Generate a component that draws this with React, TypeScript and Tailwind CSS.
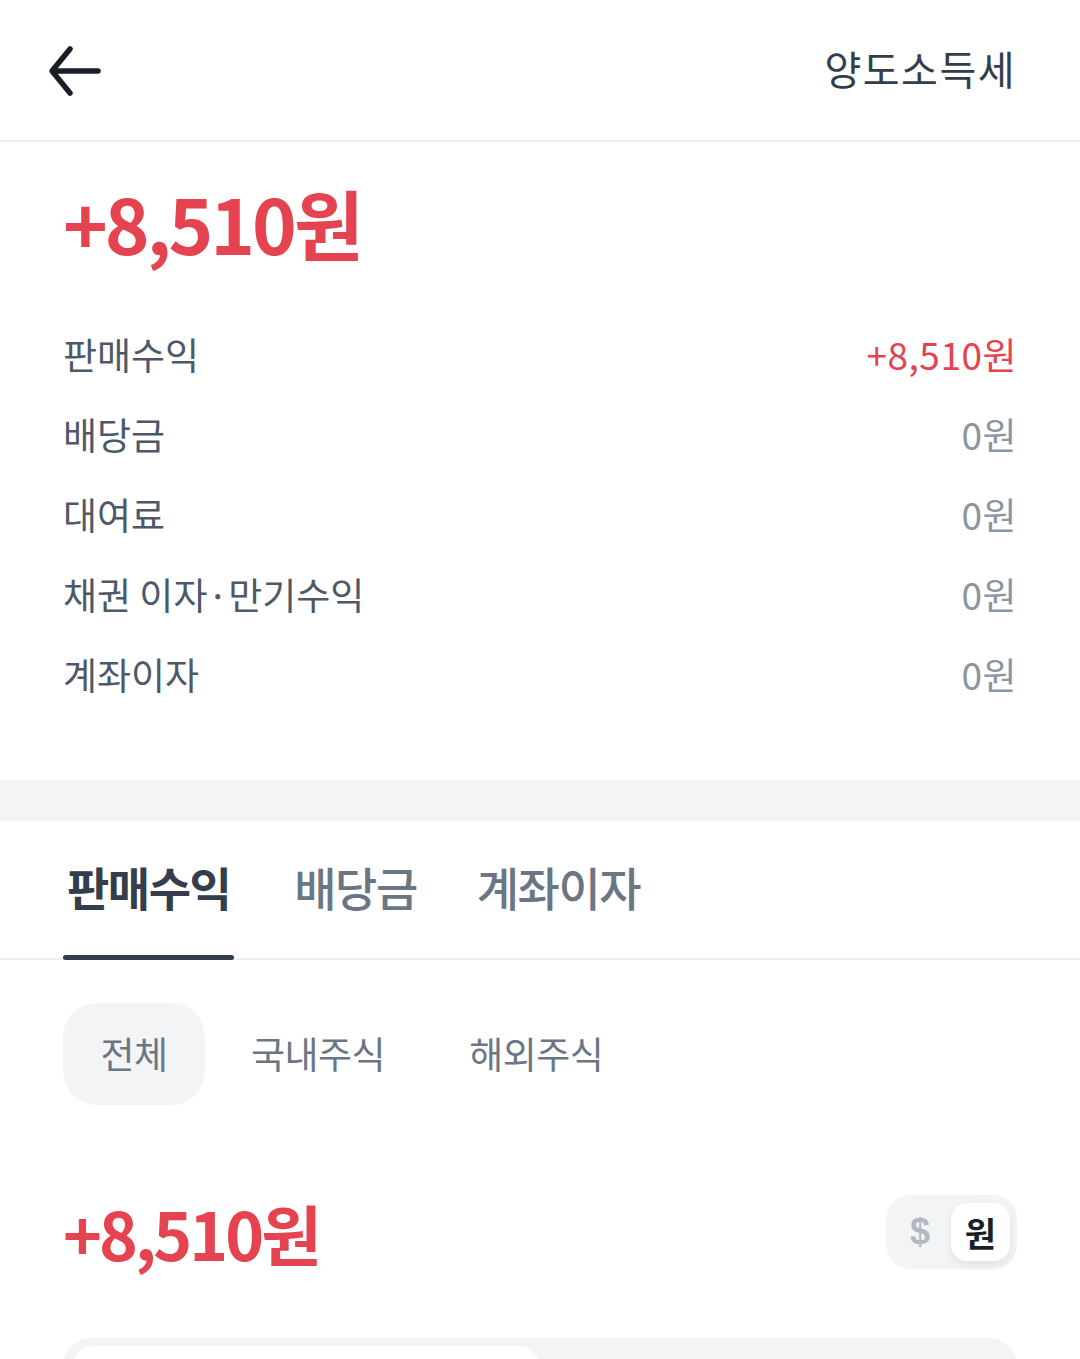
import React from 'react';

const rows = [
    { label: '판매수익', value: '+8,510원', red: true },
    { label: '배당금', value: '0원' },
    { label: '대여료', value: '0원' },
    { label: '채권 이자·만기수익', value: '0원' },
    { label: '계좌이자', value: '0원' },
];

const font = { fontFamily: '"Noto Sans CJK KR", "Noto Sans", sans-serif' };

export default function App() {
    return (
        <div className="w-[1080px] h-[1359px] bg-white overflow-hidden" style={font}>
            {/* header */}
            <div className="h-[142px] flex items-center justify-between pl-[44px] pr-[64px] border-b-2 border-[#eceef0]">
                <svg width="60" height="60" viewBox="0 0 60 60" fill="none" className="mt-[10px]">
                    <path d="M54 26H9M26 4L8 26L26 48" stroke="#191f28" strokeWidth="5.5" strokeLinecap="round" strokeLinejoin="round" />
                </svg>
                <span className="text-[40px] tracking-[1.5px] text-[#333d4b] leading-none -mt-[4px]">양도소득세</span>
            </div>

            {/* summary */}
            <div className="px-[63px]">
                <div className="pt-[35px] text-[76px] font-bold text-[#e5434f] tracking-[-3px] leading-[90px]">+8,510원</div>
                <div className="mt-[48px] pb-[65px]">
                    {rows.map((r) => (
                        <div key={r.label} className="h-[80px] flex items-center justify-between text-[37px] tracking-[0px]">
                            <span className="text-[#4e5968]">{r.label}</span>
                            <span className={r.red ? 'text-[#e5434f] tracking-[0.5px]' : 'text-[#8b95a1] tracking-[0.5px]'}>{r.value}</span>
                        </div>
                    ))}
                </div>
            </div>

            <div className="h-[41px] bg-[#f2f4f6]" />

            {/* tabs */}
            <div className="h-[139px] flex items-end px-[63px] border-b-2 border-[#eceef0]">
                <div className="flex gap-[60px] items-end">
                    <div className="flex flex-col items-center">
                        <span className="text-[46px] font-bold tracking-[-1.5px] text-[#333d4b] leading-none px-[4px]">판매수익</span>
                        <div className="mt-[46px] h-[5px] w-full rounded-full bg-[#333d4b] -mb-[2px]" />
                    </div>
                    <span className="text-[46px] font-medium tracking-[-1.5px] text-[#6b7684] leading-none mb-[49px]">배당금</span>
                    <span className="text-[46px] font-medium tracking-[-1.5px] text-[#6b7684] leading-none mb-[49px]">계좌이자</span>
                </div>
            </div>

            {/* chips */}
            <div className="px-[63px] mt-[43px] flex items-center gap-[46px]">
                <div className="h-[102px] w-[142px] rounded-[34px] bg-[#f2f4f6] flex items-center justify-center text-[37px] tracking-[-0.5px] text-[#6b7684]">전체</div>
                <span className="text-[37px] tracking-[-0.5px] text-[#6b7684]">국내주식</span>
                <span className="ml-[38px] text-[37px] tracking-[-0.5px] text-[#6b7684]">해외주식</span>
            </div>

            {/* amount + toggle */}
            <div className="px-[63px] mt-[90px] h-[74px] flex items-center justify-between">
                <span className="text-[66px] font-bold text-[#e5434f] tracking-[-3px] leading-none">+8,510원</span>
                <div className="w-[131px] h-[74px] rounded-[24px] bg-[#f2f4f6] flex items-center pl-[24px] pr-[7px]">
                    <span className="text-[36px] font-bold text-[#b0b8c1] leading-none" style={{ fontFamily: '"Liberation Sans", sans-serif' }}>$</span>
                    <div className="ml-auto w-[59px] h-[58px] rounded-[16px] bg-white shadow-[0_4px_10px_rgba(0,0,0,0.08)] flex items-center justify-center text-[34px] font-bold text-[#191f28]">원</div>
                </div>
            </div>

            {/* segmented */}
            <div className="mx-[63px] mt-[69px] h-[80px] rounded-t-[28px] bg-[#f2f4f6] pt-[8px] px-[9px]">
                <div className="w-[468px] h-full rounded-t-[22px] bg-white" />
            </div>
        </div>
    );
}
